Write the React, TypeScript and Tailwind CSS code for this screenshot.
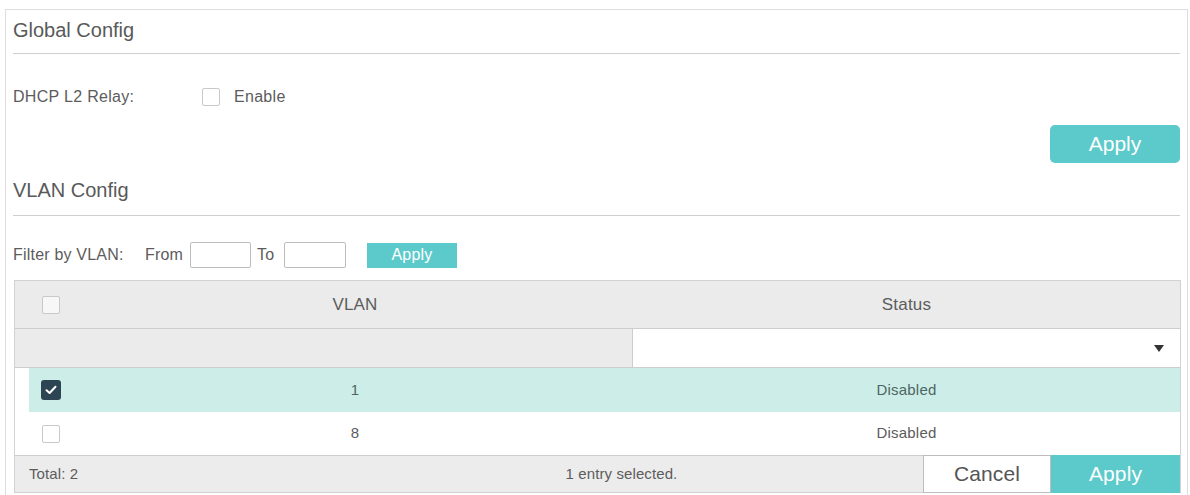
import React from "react";

const teal = "bg-[#5ccaca]";

function Box({ checked = false }: { checked?: boolean }) {
  if (checked) {
    return (
      <div className="w-[20px] h-[20px] rounded-[3px] bg-[#2d4452] flex items-center justify-center">
        <svg width="12" height="10" viewBox="0 0 12 10" fill="none">
          <path d="M1.5 5.2 L4.6 8 L10.5 1.8" stroke="#ffffff" strokeWidth="2" strokeLinecap="round" strokeLinejoin="round" />
        </svg>
      </div>
    );
  }
  return <div className="w-[18px] h-[18px] rounded-[2px] border border-[#c9c9c9] bg-white/60" />;
}

export default function App() {
  return (
    <div
      className="w-[1190px] h-[495px] overflow-hidden bg-white pt-[9px] pl-[5px] text-[#5c5c5c]"
      style={{ fontFamily: '"Liberation Sans", Arial, sans-serif' }}
    >
      <div className="w-[1183px] h-[486px] border-l border-t border-r border-[#dddddd] pl-[7px] pr-[7px]">
        {/* Global Config */}
        <div className="h-[44px] pt-[9px] border-b border-[#cfcfcf] text-[20px] leading-[22px] text-[#595959]">
          Global Config
        </div>
        <div className="mt-[28px] h-[30px] flex items-center text-[16px] tracking-[0.3px]">
          <div className="w-[189px]">DHCP L2 Relay:</div>
          <Box />
          <div className="ml-[14px]">Enable</div>
        </div>
        <div className="mt-[13px] flex justify-end">
          <div className={`w-[130px] h-[38px] rounded-[5px] ${teal} text-white text-[21px] flex items-center justify-center`}>
            Apply
          </div>
        </div>

        {/* VLAN Config */}
        <div className="h-[53px] pt-[16px] border-b border-[#cfcfcf] text-[20px] leading-[22px] text-[#595959]">
          VLAN Config
        </div>
        <div className="mt-[26px] h-[26px] flex items-center text-[16px] tracking-[0.2px]">
          <div className="w-[132px]">Filter by VLAN:</div>
          <div className="w-[45px]">From</div>
          <div className="w-[61px] h-[26px] border border-[#bdbdbd] rounded-[2px] bg-white" />
          <div className="w-[33px] pl-[6px]">To</div>
          <div className="w-[62px] h-[26px] border border-[#bdbdbd] rounded-[2px] bg-white" />
          <div className={`ml-[21px] w-[90px] h-[25px] ${teal} text-white text-[16px] flex items-center justify-center`}>
            Apply
          </div>
        </div>

        {/* Table */}
        <div className="mt-[12px] ml-[1px] w-[1167px] border border-[#d2d2d2]">
          <div className="h-[48px] bg-[#ebebeb] flex items-center border-b border-[#cdcdcd] text-[17px] tracking-[0.2px]">
            <div className="w-[62px] pl-[27px] flex items-center">
              <Box />
            </div>
            <div className="w-[556px] text-center">VLAN</div>
            <div className="flex-1 text-center">Status</div>
          </div>
          <div className="h-[39px] flex border-b border-[#cdcdcd]">
            <div className="w-[618px] bg-[#ebebeb] border-r border-[#cdcdcd]" />
            <div className="flex-1 bg-white flex items-center justify-end pr-[16px]">
              <svg width="10" height="7" viewBox="0 0 10 7">
                <path d="M0 0 L10 0 L5 7 Z" fill="#333333" />
              </svg>
            </div>
          </div>
          <div className="h-[44px] ml-[14px] bg-[#cdeee8] flex items-center text-[15px] tracking-[0.2px] text-[#4e6663]">
            <div className="w-[48px] pl-[12px] flex items-center">
              <Box checked />
            </div>
            <div className="w-[556px] text-center">1</div>
            <div className="flex-1 text-center">Disabled</div>
          </div>
          <div className="h-[43px] ml-[14px] bg-white flex items-center text-[15px] tracking-[0.2px]">
            <div className="w-[48px] pl-[13px] flex items-center">
              <Box />
            </div>
            <div className="w-[556px] text-center">8</div>
            <div className="flex-1 text-center">Disabled</div>
          </div>
          <div className="h-[37px] bg-[#ececec] border-t border-[#cdcdcd] flex items-stretch text-[15px] tracking-[0.1px]">
            <div className="w-[305px] pl-[14px] flex items-center">Total: 2</div>
            <div className="w-[603px] flex items-center justify-center">1 entry selected.</div>
            <div className="w-[128px] -mt-[1px] h-[38px] bg-white border border-[#bdbdbd] flex items-center justify-center text-[21px] text-[#555]">
              Cancel
            </div>
            <div className={`flex-1 -mt-[1px] h-[38px] ${teal} text-white text-[21px] flex items-center justify-center`}>
              Apply
            </div>
          </div>
        </div>
      </div>
    </div>
  );
}
